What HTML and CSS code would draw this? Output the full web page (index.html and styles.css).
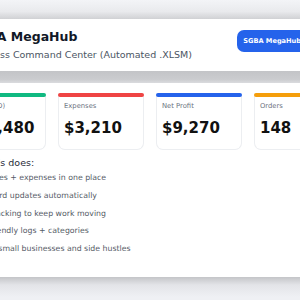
FILE: index.html
```html
<!DOCTYPE html>
<html>
	<head>
		<meta charset="UTF-8">
		<title>SGBA MegaHub</title>
		<link rel="stylesheet" href="styles.css">
	</head>
	<body>
		<div id="frame">
			<div class="top"></div>
			<div class="hero">
				<div class="brand">
					<h1>SGBA MegaHub</h1>
					<p>Business Command Center (Automated .XLSM)</p>
				</div>
				<a class="badge" href="#">SGBA MegaHub</a>
			</div>
			<div class="band"></div>
			<div class="panel">
				<div class="stats">
					<div class="card green">
						<span class="label">Sales (YTD)</span>
						<span class="value">$12,480</span>
					</div>
					<div class="card red">
						<span class="label">Expenses</span>
						<span class="value">$3,210</span>
					</div>
					<div class="card blue">
						<span class="label">Net Profit</span>
						<span class="value">$9,270</span>
					</div>
					<div class="card orange">
						<span class="label">Orders</span>
						<span class="value">148</span>
					</div>
				</div>
				<h2>What this does:</h2>
				<ul class="feats">
					<li>Track sales + expenses in one place</li>
					<li>Dashboard updates automatically</li>
					<li>Order tracking to keep work moving</li>
					<li>Excel-friendly logs + categories</li>
					<li>Built for small businesses and side hustles</li>
				</ul>
			</div>
			<div class="bottom"></div>
		</div>
	</body>
</html>
```

FILE: styles.css
```css
*{margin: 0;padding: 0;box-sizing: border-box;}
a{text-decoration: none;}
ul,li{list-style: none;}
body{font-family: "DejaVu Sans", sans-serif;background: #eff0f4;overflow: hidden;width: 300px;height: 300px;}
#frame{width: 420px;margin-left: -40px;}
.top{height: 19px;background: linear-gradient(#f3f4f7, #e9eaed 60%, #d0d1d4);}
.hero{height: 52px;background: #fff;display: flex;justify-content: space-between;align-items: flex-start;padding: 10px 73px 10px 8px;}
.brand h1{font-size: 12.5px;line-height: 16px;color: #111827;font-weight: bold;}
.brand p{font-size: 9.5px;line-height: 12px;color: #4b5563;margin-top: 4px;}
.badge{margin-top: 1px;background: #2563eb;color: #fff;font-size: 6.6px;font-weight: bold;line-height: 8px;padding: 7px 6px;border-radius: 7px;white-space: nowrap;}
.band{height: 12px;background: linear-gradient(#c3c4c7, #cbcccf 70%, #dadbde);}
.panel{height: 194px;background: #fff;padding-top: 10px;}
.stats{display: flex;gap: 12px;}
.card{width: 86px;height: 57px;border: 1px solid #eceef1;border-top: 0;border-radius: 4px 4px 7px 7px;position: relative;padding: 9px 5px 0;display: flex;flex-direction: column;}
.card:before{content: "";position: absolute;left: -1px;right: -1px;top: 0;height: 4px;border-radius: 3px;}
.green:before{background: #10b981;}
.red:before{background: #ef4444;}
.blue:before{background: #2563eb;}
.orange:before{background: #f59e0b;}
.label{font-size: 6.8px;line-height: 9px;color: #6b7280;}
.value{font-size: 15px;line-height: 18px;font-weight: bold;color: #111;margin-top: 8px;}
h2{font-size: 9.5px;line-height: 12px;font-weight: normal;color: #1f2937;margin-top: 7px;}
.feats{padding-left: 5px;margin-top: 4px;}
.feats li{font-size: 7.8px;line-height: 10px;color: #555b66;margin-bottom: 7.75px;}
.bottom{height: 20px;background: linear-gradient(#c4c5c8, #e3e4e8 40%, #eff0f4);}
```
